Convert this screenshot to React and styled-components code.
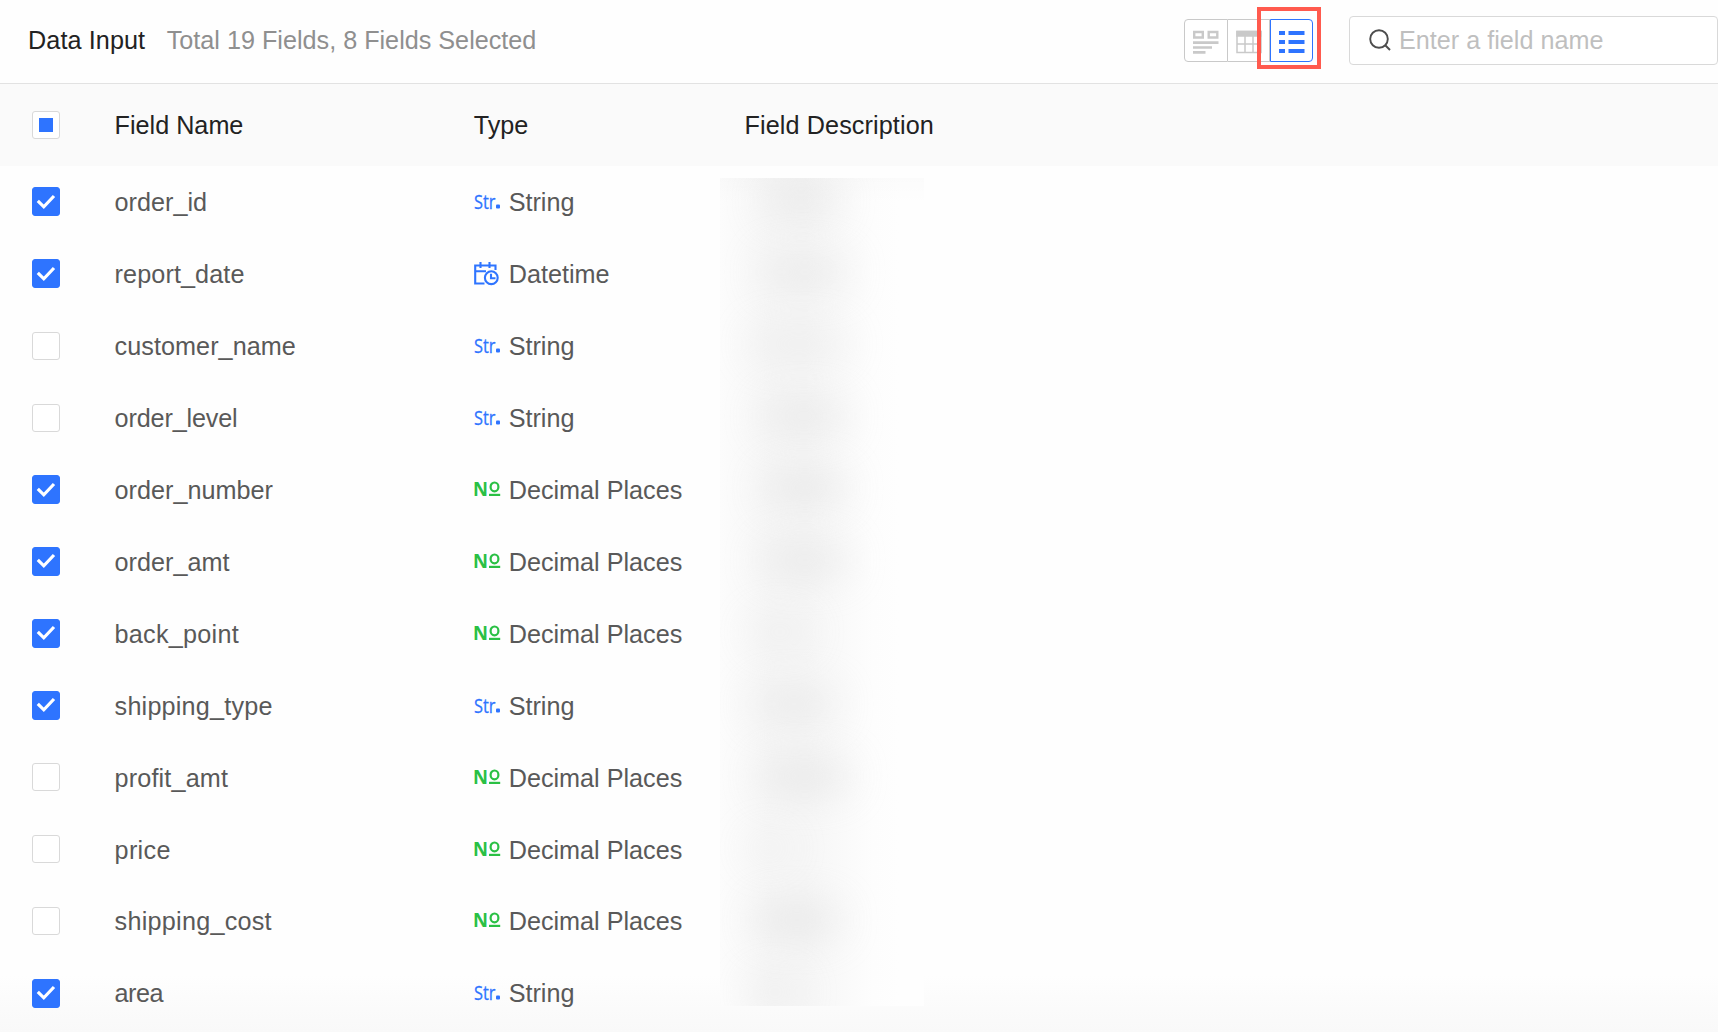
import styled, { createGlobalStyle } from "styled-components";

/* =============================================================================
                              STYLED COMPONENTS.
============================================================================= */
const GlobalStyle = createGlobalStyle`
  * { box-sizing: border-box; }
  body {
    margin: 0;
    background: #fefefe;
    font-family: "Liberation Sans", Arial, sans-serif;
    font-size: 25.2px;
    overflow: hidden;
  }
`

const Page = styled.main`
  position: relative;
  display: flex;
  flex-direction: column;
  width: 1718px;
  height: 1032px;
  overflow: hidden;
  background: linear-gradient(#fefefe 975px, #f9f9f9 1032px);
`

const Toolbar = styled.header`
  display: flex;
  flex-shrink: 0;
  align-items: center;
  height: 84px;
  padding-left: 28px;
  padding-bottom: 3px;
  border-bottom: 1px solid #e2e2e2;
`
const Heading = styled.h1`
  margin: 0;
  font-size: inherit;
  font-weight: 400;
  letter-spacing: 0.1px;
  color: #222;
`
const Summary = styled.span`
  margin-left: 21.5px;
  color: #8f8f8f;
`
const ViewSwitch = styled.div`
  position: relative;
  display: grid;
  grid-template-columns: 44px 42px 43px;
  height: 43px;
  margin-left: auto;
`
const ViewButton = styled.button`
  display: flex;
  align-items: center;
  justify-content: center;
  margin: 0;
  padding: 3px 0 0;
  background: #fff;
  border: 1px solid ${({ $active }) => ($active ? "#2e74ff" : "#c9c9c9")};
  border-left-width: ${({ $joined }) => ($joined ? 0 : "1px")};
  border-radius: ${({ $radius }) => $radius || 0};
`
const Highlight = styled.div`
  position: absolute;
  left: 73px;
  top: -12px;
  width: 64px;
  height: 62px;
  border: 4px solid #ff5a4e;
`
const SearchBox = styled.label`
  display: flex;
  align-items: center;
  gap: 8px;
  width: 369px;
  height: 49px;
  margin-left: 36px;
  padding-left: 19px;
  color: #bfbfbf;
  border: 1px solid #d9d9d9;
  border-radius: 4px;
  background: #fff;
`

const Row = styled.div`
  display: grid;
  grid-template-columns: 82.6px 359.1px 270.9px 1fr;
  flex-shrink: 0;
  align-items: center;
  height: 71.95px;
  padding-left: 32px;
  color: #595959;
`
const HeadRow = styled(Row)`
  height: 82px;
  margin-bottom: 0.6px;
  color: #222;
  background: #fafafa;
`
const Name = styled.span`
  letter-spacing: ${({ $tracking }) => $tracking || 0}px;
`
const Checkbox = styled.span`
  display: flex;
  align-items: center;
  justify-content: center;
  width: 28px;
  height: ${({ $checked }) => ($checked ? "29px" : "28px")};
  margin-bottom: ${({ $head }) => ($head ? 0 : "1.6px")};
  border: 1px solid ${({ $checked }) => ($checked ? "#2e74ff" : "#d9d9d9")};
  border-radius: 3px;
  background: ${({ $checked }) => ($checked ? "#2e74ff" : "#fff")};
`
const Partial = styled.i`
  width: 14px;
  height: 14px;
  background: #2e74ff;
`
const TypeCell = styled.div`
  display: flex;
  align-items: center;
`
const TypeIcon = styled.span`
  display: flex;
  width: 35px;
  padding-bottom: 1px;
  color: ${({ $color }) => $color};
`

/* Description column is masked */
const Mask = styled.div`
  position: absolute;
  left: 720px;
  top: 178px;
  width: 204px;
  height: 828px;
  overflow: hidden;
  background:
    linear-gradient(rgba(0, 0, 0, 0.012), transparent 26px),
    linear-gradient(90deg, #fcfcfc, #f6f6f6 25%, #f6f6f6 42%, #fdfdfd 75%, #fefefe 88%);
`
const Smudge = styled.i`
  position: absolute;
  height: 30px;
  border-radius: 15px;
  background: #dcdcdc;
  filter: blur(20px);
`

/* =============================================================================
                              CONTENT.
============================================================================= */
// mask: left, width, opacity
const fields = [
  { name: "order_id", type: "String", checked: true, mask: [46, 70, 0.55] },
  { name: "report_date", type: "Datetime", checked: true, tracking: 0.1, mask: [44, 82, 0.5] },
  { name: "customer_name", type: "String", tracking: 0.05, mask: [32, 94, 0.35] },
  { name: "order_level", type: "String", tracking: -0.15, mask: [44, 80, 0.55] },
  { name: "order_number", type: "Decimal Places", checked: true, mask: [46, 78, 0.6] },
  { name: "order_amt", type: "Decimal Places", checked: true, mask: [44, 82, 0.55] },
  { name: "back_point", type: "Decimal Places", checked: true, tracking: 0.25, mask: [30, 60, 0.3] },
  { name: "shipping_type", type: "String", checked: true, tracking: 0.2, mask: [34, 80, 0.5] },
  { name: "profit_amt", type: "Decimal Places", tracking: 0.15, mask: [42, 86, 0.6] },
  { name: "price", type: "Decimal Places", tracking: 0.3, mask: [26, 46, 0.2] },
  { name: "shipping_cost", type: "Decimal Places", tracking: 0.25, mask: [36, 82, 0.6] },
  { name: "area", type: "String", checked: true, tracking: -0.5, mask: [30, 50, 0.35] },
]

const Check = () => (
  <svg width="20" height="16" viewBox="0 0 20 16" fill="none" stroke="#fff" strokeWidth="3.2">
    <path d="M1.800 6.800l6 6L18 2" />
  </svg>
)

const Str = () => (
  <svg width="27" height="30" viewBox="0 -5 27 30" fill="currentColor">
    <text x="0" y="16.5" fontSize="20.5" fontFamily="Open Sans, sans-serif" textLength="21.5" lengthAdjust="spacingAndGlyphs" stroke="currentColor" strokeWidth="0.3">Str</text>
    <rect x="22" y="12.600" width="4" height="4" rx="1" />
  </svg>
)

const Num = () => (
  <svg width="27" height="30" viewBox="0 -5 27 30" fill="currentColor">
    <text x="-1" y="16" fontSize="19" fontWeight="700" fontFamily="Open Sans, sans-serif" textLength="15" lengthAdjust="spacingAndGlyphs">N</text>
    <ellipse cx="20.5" cy="6.900" rx="3.900" ry="4.400" fill="none" stroke="currentColor" strokeWidth="2.2" />
    <path d="M15 13.800h11.200v2.200H15z" />
  </svg>
)

const DateIcon = () => (
  <svg width="26" height="24" viewBox="0 0 26 24" fill="none" stroke="currentColor" strokeWidth="2.1">
    <path d="M10.500 21.500H1.200V3.500h20.300V8M1 9.300h11M6.500 0v6M15.500 0v6" />
    <circle cx="17.300" cy="15.700" r="6.400" />
    <path d="M17 11.700v4.600h4.500" />
  </svg>
)

const typeIcons = {
  String: { color: "#2e74ff", icon: <Str /> },
  Datetime: { color: "#2e74ff", icon: <DateIcon /> },
  "Decimal Places": { color: "#2ac044", icon: <Num /> },
}

/* =============================================================================
                              MAIN COMPONENT.
============================================================================= */
function App() {
  return (
    <Page>
      <GlobalStyle />
      <Toolbar>
        <Heading>Data Input</Heading>
        <Summary>Total 19 Fields, 8 Fields Selected</Summary>
        <ViewSwitch>
          <ViewButton $radius="4px 0 0 4px">
            <svg width="26" height="24" viewBox="0 0 26 24" fill="#c9c9c9">
              <path fill="none" stroke="#c9c9c9" strokeWidth="2.4" d="M1.200 2h8.600v5.500H1.200zM15.700 2h8.600v5.500h-8.600z" />
              <path d="M0 11.300h25.500v2.600H0zM0 16.200h19v2.600H0zM0 21.100h12.500v2.600H0z" />
            </svg>
          </ViewButton>
          <ViewButton $joined>
            <svg width="26" height="24" viewBox="0 0 26 24" fill="none" stroke="#c9c9c9" strokeWidth="1.500">
              <path d="M1 1.500h24v21H1zM1 14h24M9 6v16.500M17 6v16.500" />
              <path fill="#c9c9c9" d="M1 1.500h24v4.500H1z" />
            </svg>
          </ViewButton>
          <ViewButton $active $radius="0 4px 4px 0">
            <svg width="26" height="24" viewBox="0 0 26 24" fill="#2e74ff">
              <path d="M0 1h6v4H0zM9.500 1h16v4h-16zM0 10h6v4H0zM9.500 10h16v4h-16zM0 19h6v4H0zM9.500 19h16v4h-16z" />
            </svg>
          </ViewButton>
          <Highlight />
        </ViewSwitch>
        <SearchBox>
          <svg width="22" height="22" viewBox="0 0 22 22" fill="none" stroke="#4d4d4d" strokeWidth="1.900">
            <circle cx="10" cy="10" r="8.800" />
            <path d="M16 16l5 5" />
          </svg>
          Enter a field name
        </SearchBox>
      </Toolbar>

      <HeadRow>
        <Checkbox $head><Partial /></Checkbox>
        <Name>Field Name</Name>
        <Name>Type</Name>
        <Name $tracking={0.1}>Field Description</Name>
      </HeadRow>
      {fields.map(({ name, type, checked, tracking }) => (
        <Row key={name}>
          <Checkbox $checked={checked}>{checked && <Check />}</Checkbox>
          <Name $tracking={tracking}>{name}</Name>
          <TypeCell>
            <TypeIcon $color={typeIcons[type].color}>{typeIcons[type].icon}</TypeIcon>
            {type}
          </TypeCell>
        </Row>
      ))}

      <Mask>
        {fields.map(({ name, mask: [left, width, opacity] }, idx) => (
          <Smudge key={name} style={{ left, width, opacity, top: 7 + idx * 72 }} />
        ))}
      </Mask>
    </Page>
  )
}

export default App;
